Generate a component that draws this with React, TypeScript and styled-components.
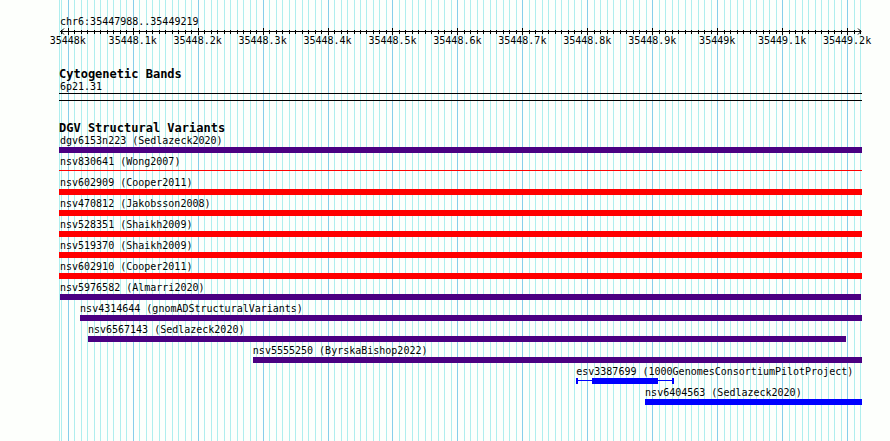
import React from "react";
import styled, { createGlobalStyle } from "styled-components";

const REGION_START = 35447988;
const REGION_END = 35449219;
/* the drawing area reaches slightly beyond the region on both sides */
const VIEW_START = REGION_START - 1.5;
const VIEW_END = REGION_END + 4;

const pct = (bp: number) =>
  ((Math.min(Math.max(bp, VIEW_START), VIEW_END) - VIEW_START) / (VIEW_END - VIEW_START)) * 100;
const at = (bp: number) => `${pct(bp)}%`;

const PURPLE = "#4b0082";
const RED = "#ff0000";
const BLUE = "#0000ff";

type Shape = "bar" | "line" | "range";

interface Variant {
  id: string;
  study: string;
  color: string;
  start: number;
  end: number;
  shape?: Shape;
  core?: [number, number];
}

const variants: Variant[] = [
  { id: "dgv6153n223", study: "Sedlazeck2020", color: PURPLE, start: 0, end: Infinity },
  { id: "nsv830641", study: "Wong2007", color: RED, start: 0, end: Infinity, shape: "line" },
  { id: "nsv602909", study: "Cooper2011", color: RED, start: 0, end: Infinity },
  { id: "nsv470812", study: "Jakobsson2008", color: RED, start: 0, end: Infinity },
  { id: "nsv528351", study: "Shaikh2009", color: RED, start: 0, end: Infinity },
  { id: "nsv519370", study: "Shaikh2009", color: RED, start: 0, end: Infinity },
  { id: "nsv602910", study: "Cooper2011", color: RED, start: 0, end: Infinity },
  { id: "nsv5976582", study: "Almarri2020", color: PURPLE, start: 35447988, end: 35449221 },
  { id: "nsv4314644", study: "gnomADStructuralVariants", color: PURPLE, start: 35448019, end: Infinity },
  { id: "nsv6567143", study: "Sedlazeck2020", color: PURPLE, start: 35448031, end: 35449198 },
  { id: "nsv5555250", study: "ByrskaBishop2022", color: PURPLE, start: 35448285, end: Infinity },
  {
    id: "esv3387699",
    study: "1000GenomesConsortiumPilotProject",
    color: BLUE,
    start: 35448783,
    end: 35448934,
    shape: "range",
    core: [35448807, 35448909],
  },
  { id: "nsv6404563", study: "Sedlazeck2020", color: BLUE, start: 35448889, end: Infinity },
];

const ticks: number[] = [];
for (let bp = Math.ceil(REGION_START / 10) * 10; bp <= REGION_END + 1; bp += 10) ticks.push(bp);
const isMajor = (bp: number) => bp % 100 === 0;

const GlobalStyle = createGlobalStyle`
  body {
    margin: 0;
    background: #fdfffc;
    color: #000;
    font-family: "DejaVu Sans Mono", monospace;
    font-size: 10px;
    line-height: 13px;
  }
`;

const Browser = styled.main`
  padding: 0 28px 0 59px;
  overflow: hidden;
`;

const Panel = styled.div`
  position: relative;
  box-sizing: border-box;
  min-height: 100vh;
  padding: 15px 0;
  display: flex;
  flex-direction: column;
  gap: 21px;
`;

const GridLines = styled.svg`
  position: absolute;
  inset: 0;
  width: 100%;
  height: 100%;
`;

const Track = styled.section`
  position: relative;
`;

const TrackTitle = styled.h2`
  margin: 0;
  font-size: 12px;
  line-height: 12px;
  font-weight: bold;
  white-space: nowrap;
`;

const Label = styled.div`
  padding-left: 1px;
  white-space: nowrap;
`;

const Axis = styled.svg`
  display: block;
  width: 100%;
  height: 19px;
  overflow: visible;
`;

const Band = styled.div`
  height: 6px;
  border: solid #000;
  border-width: 1px 0;
`;

const VariantList = styled.ul`
  margin: 0;
  padding: 0;
  list-style: none;
  display: flex;
  flex-direction: column;
  gap: 2px;
`;

const VariantName = styled.div`
  white-space: nowrap;
`;

const Glyph = styled.svg`
  display: block;
  width: 100%;
  height: 6px;
`;

function Grid() {
  return (
    <GridLines shapeRendering="crispEdges" aria-hidden="true">
      <rect x="0" y="0" width="1" height="100%" fill="#afeeee" />
      {ticks.map((bp) => (
        <rect key={bp} x={at(bp)} y="0" width="1" height="100%" fill={isMajor(bp) ? "#87ceeb" : "#afeeee"} />
      ))}
    </GridLines>
  );
}

function Ruler() {
  return (
    <Axis role="img" aria-label="Position scale">
      <g shapeRendering="crispEdges">
        <rect x={at(REGION_START)} y="3" width={`${pct(REGION_END + 2) - pct(REGION_START)}%`} height="1" />
        {ticks.map((bp) => (
          <rect key={bp} x={at(bp)} y={isMajor(bp) ? 0 : 2} width="1" height={isMajor(bp) ? 7 : 4} />
        ))}
      </g>
      <svg x={at(REGION_START)} overflow="visible">
        <path d="M4 0.5 L1 3.5 L4 6.5" fill="none" stroke="#000" />
      </svg>
      <svg x="100%" overflow="visible">
        <path d="M-4 0.5 L-1 3.5 L-4 6.5" fill="none" stroke="#000" />
      </svg>
      {ticks.filter(isMajor).map((bp) => (
        <text key={bp} x={at(bp)} y="16" textAnchor="middle">
          {bp / 1000}k
        </text>
      ))}
    </Axis>
  );
}

function VariantGlyph({ variant }: { variant: Variant }) {
  const { start, end, color, shape = "bar", core } = variant;
  const span = (a: number, b: number) => ({ x: at(a), width: `${pct(b) - pct(a)}%` });
  return (
    <Glyph shapeRendering="crispEdges" fill={color} aria-hidden="true">
      {shape === "bar" && <rect {...span(start, end)} y="0" height="6" />}
      {shape === "line" && <rect {...span(start, end)} y="2" height="1" />}
      {shape === "range" && core && (
        <>
          <rect {...span(start, end)} y="2" height="1" />
          <rect {...span(core[0], core[1])} y="0" height="6" />
          <rect x={at(start)} y="0" width="2" height="6" />
          <rect x={at(end - 3)} y="0" width="2" height="6" />
        </>
      )}
    </Glyph>
  );
}

export default function App() {
  return (
    <>
      <GlobalStyle />
      <Browser>
        <Panel>
          <Grid />
          <Track>
            <Label>
              chr6:{REGION_START}..{REGION_END}
            </Label>
            <Ruler />
          </Track>
          <Track>
            <TrackTitle>Cytogenetic Bands</TrackTitle>
            <Label>6p21.31</Label>
            <Band />
          </Track>
          <Track>
            <TrackTitle>DGV Structural Variants</TrackTitle>
            <VariantList>
              {variants.map((v) => (
                <li key={v.id}>
                  <VariantName style={{ marginLeft: at(Math.max(v.start, REGION_START)) }}>
                    {v.id} ({v.study})
                  </VariantName>
                  <VariantGlyph variant={v} />
                </li>
              ))}
            </VariantList>
          </Track>
        </Panel>
      </Browser>
    </>
  );
}
